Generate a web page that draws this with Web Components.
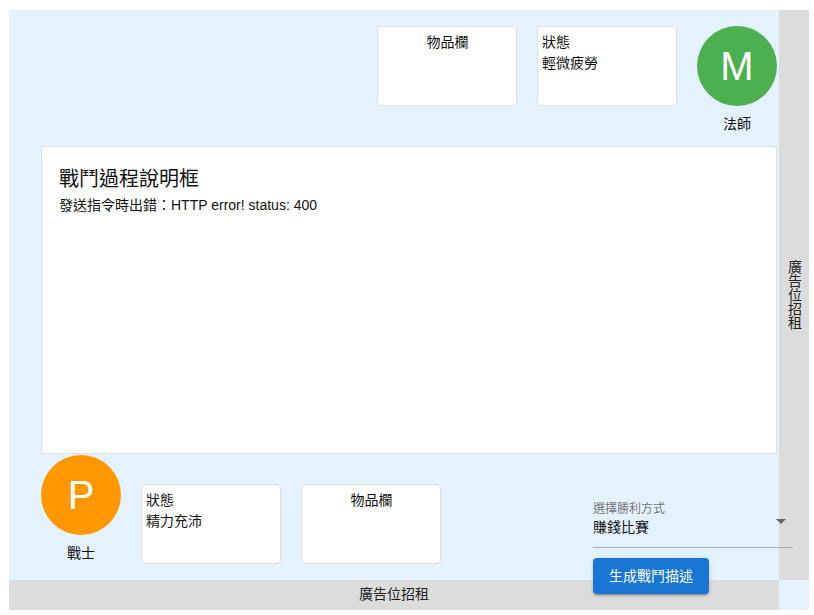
<!DOCTYPE html>
<html lang="zh-Hant">
<head>
<meta charset="utf-8">
<title>戰鬥</title>
<style>
  body {
    margin: 10px 5px 5px 9px;
    font-family: "Liberation Sans", "Noto Sans CJK TC", sans-serif;
    font-size: 14px;
    color: #111;
    background: #fff;
  }
</style>
</head>
<body>
<game-app>
  <char-avatar slot="foe" letter="M" color="#4caf50">法師</char-avatar>
  <info-box slot="foe-item" centered>物品欄</info-box>
  <info-box slot="foe-state">狀態<br>輕微疲勞</info-box>
  <battle-log slot="log" heading="戰鬥過程說明框">發送指令時出錯：HTTP error! status: 400</battle-log>
  <char-avatar slot="hero" letter="P" color="#ff9800">戰士</char-avatar>
  <info-box slot="hero-state">狀態<br>精力充沛</info-box>
  <info-box slot="hero-item" centered>物品欄</info-box>
  <win-select slot="win" label="選擇勝利方式">賺錢比賽</win-select>
  <gen-button slot="go">生成戰鬥描述</gen-button>
  <ad-bar slot="rail" vertical>廣告位招租</ad-bar>
  <ad-bar slot="bar">廣告位招租</ad-bar>
</game-app>

<script>
// Small helper so every element gets an open shadow root with its own styles
function shadow(el, html) {
  el.attachShadow({ mode: 'open' });
  el.shadowRoot.innerHTML = html;
}

class GameApp extends HTMLElement {
  constructor() {
    super();
    shadow(this, `
      <style>
        :host {
          display: grid;
          grid-template-columns: 770px 30px;
          grid-template-rows: 570px 30px;
          width: 800px;
          height: 600px;
          background: #e3f2fd;
        }
        .main {
          display: flex;
          flex-direction: column;
          padding: 16px 2px 0 32px;
          box-sizing: border-box;
          min-width: 0;
        }
        .top {
          display: flex;
          justify-content: flex-end;
          gap: 20px;
          height: 120px;
          flex: none;
        }
        .log { display: block; height: 308px; flex: none; }
        .bottom {
          display: flex;
          align-items: flex-start;
          margin-top: 1px;
        }
        .boxes {
          display: flex;
          gap: 20px;
          margin: 29px 0 0 20px;
        }
        .controls {
          display: flex;
          flex-direction: column;
          align-items: flex-start;
          gap: 10px;
          flex: none;
          width: 200px;
          margin: 45px 0 0 152px;
          position: relative;
          z-index: 1;
        }
      </style>
      <div class="main">
        <div class="top">
          <slot name="foe-item"></slot>
          <slot name="foe-state"></slot>
          <slot name="foe"></slot>
        </div>
        <div class="log"><slot name="log"></slot></div>
        <div class="bottom">
          <slot name="hero"></slot>
          <div class="boxes">
            <slot name="hero-state"></slot>
            <slot name="hero-item"></slot>
          </div>
          <div class="controls">
            <slot name="win"></slot>
            <slot name="go"></slot>
          </div>
        </div>
      </div>
      <slot name="rail"></slot>
      <slot name="bar"></slot>
    `);
  }
}

class CharAvatar extends HTMLElement {
  constructor() {
    super();
    shadow(this, `
      <style>
        :host {
          display: flex;
          flex-direction: column;
          align-items: center;
          width: 80px;
          flex: none;
        }
        .face {
          width: 80px;
          height: 80px;
          border-radius: 50%;
          display: flex;
          align-items: center;
          justify-content: center;
          color: #fff;
          font-size: 40px;
        }
        .name { margin-top: 8px; line-height: 21px; }
      </style>
      <div class="face"></div>
      <div class="name"><slot></slot></div>
    `);
  }
  connectedCallback() {
    const face = this.shadowRoot.querySelector('.face');
    face.textContent = this.getAttribute('letter');
    face.style.background = this.getAttribute('color');
  }
}

class InfoBox extends HTMLElement {
  constructor() {
    super();
    shadow(this, `
      <style>
        :host {
          display: block;
          width: 140px;
          height: 80px;
          box-sizing: border-box;
          padding: 5px 4px;
          background: #fff;
          border: 1px solid #e0e0e0;
          border-radius: 4px;
          line-height: 21px;
          flex: none;
        }
        :host([centered]) { text-align: center; padding-left: 5px; }
      </style>
      <slot></slot>
    `);
  }
}

class BattleLog extends HTMLElement {
  constructor() {
    super();
    shadow(this, `
      <style>
        :host {
          display: block;
          height: 100%;
          box-sizing: border-box;
          padding: 17px 17px;
          background: #fff;
          border: 1px solid #e0e0e0;
          border-radius: 4px;
        }
        .title { font-size: 20px; line-height: 30px; margin-bottom: 1px; }
        .body { line-height: 21px; }
      </style>
      <div class="title"></div>
      <div class="body"><slot></slot></div>
    `);
  }
  connectedCallback() {
    this.shadowRoot.querySelector('.title').textContent = this.getAttribute('heading');
  }
}

class WinSelect extends HTMLElement {
  constructor() {
    super();
    shadow(this, `
      <style>
        :host {
          display: block;
          width: 200px;
          height: 48px;
          box-sizing: border-box;
          border-bottom: 1px solid #a9acb0;
          position: relative;
        }
        .label { font-size: 12px; line-height: 16px; color: #757575; margin-top: 1px; }
        .value { line-height: 21px; }
        .arrow {
          position: absolute;
          right: 7px;
          top: 19px;
          width: 0;
          height: 0;
          border-left: 5px solid transparent;
          border-right: 5px solid transparent;
          border-top: 5px solid #666;
        }
      </style>
      <div class="label"></div>
      <div class="value"><slot></slot></div>
      <div class="arrow"></div>
    `);
  }
  connectedCallback() {
    this.shadowRoot.querySelector('.label').textContent = this.getAttribute('label');
  }
}

class GenButton extends HTMLElement {
  constructor() {
    super();
    shadow(this, `
      <style>
        :host {
          display: inline-block;
          height: 36px;
          box-sizing: border-box;
          padding: 0 16px;
          line-height: 36px;
          color: #fff;
          background: #1976d2;
          border-radius: 4px;
          cursor: pointer;
          box-shadow: 0 3px 1px -2px rgba(0,0,0,.2), 0 2px 2px 0 rgba(0,0,0,.14), 0 1px 5px 0 rgba(0,0,0,.12);
        }
      </style>
      <slot></slot>
    `);
  }
}

class AdBar extends HTMLElement {
  constructor() {
    super();
    shadow(this, `
      <style>
        :host {
          display: flex;
          align-items: center;
          justify-content: center;
          background: #dcdcdc;
          color: #222;
          padding-bottom: 4px;
          box-sizing: border-box;
        }
        :host([vertical]) { writing-mode: vertical-rl; text-orientation: upright; padding-bottom: 0; }
      </style>
      <slot></slot>
    `);
  }
}

customElements.define('game-app', GameApp);
customElements.define('char-avatar', CharAvatar);
customElements.define('info-box', InfoBox);
customElements.define('battle-log', BattleLog);
customElements.define('win-select', WinSelect);
customElements.define('gen-button', GenButton);
customElements.define('ad-bar', AdBar);
</script>
</body>
</html>
